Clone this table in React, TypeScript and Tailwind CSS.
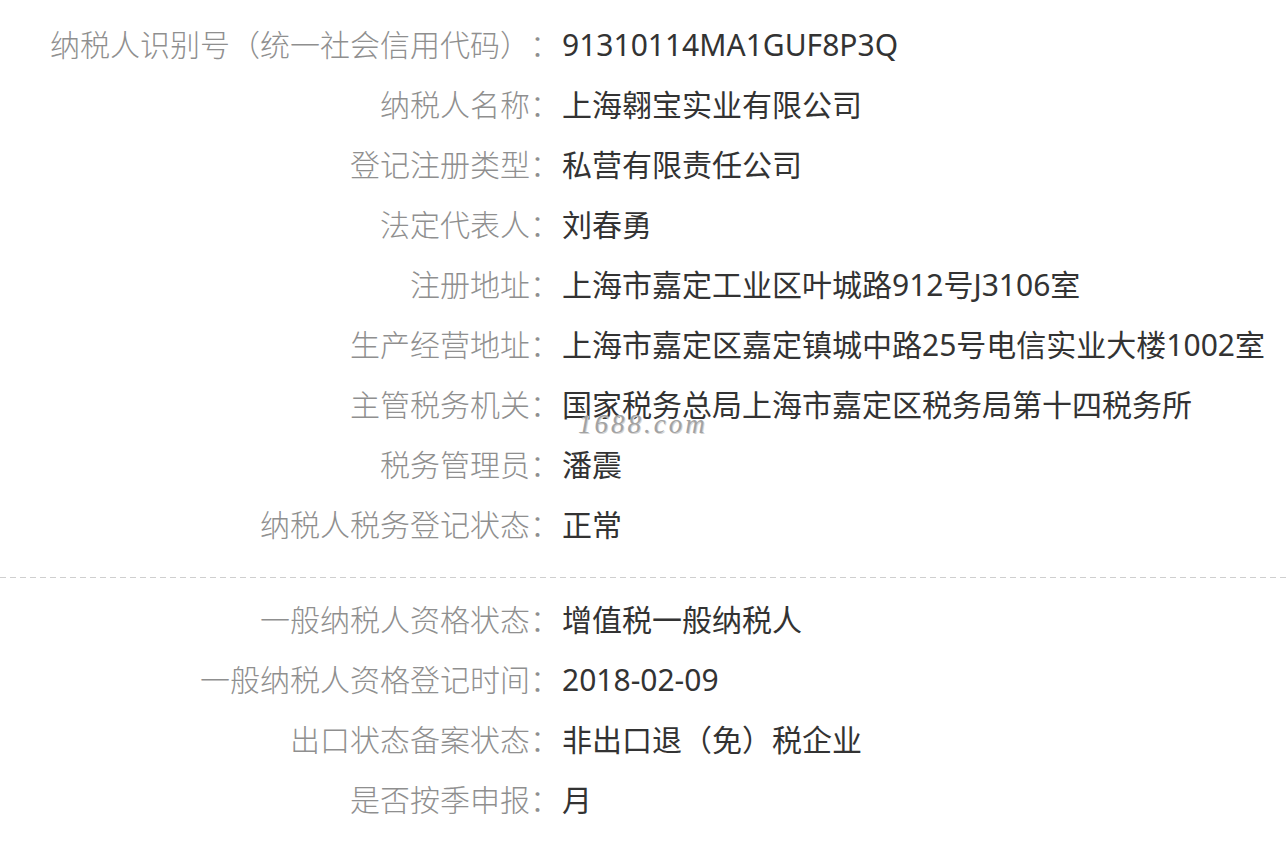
import React from 'react'

const basicRows: [string, string][] = [
  ['纳税人识别号（统一社会信用代码）', '91310114MA1GUF8P3Q'],
  ['纳税人名称', '上海翱宝实业有限公司'],
  ['登记注册类型', '私营有限责任公司'],
  ['法定代表人', '刘春勇'],
  ['注册地址', '上海市嘉定工业区叶城路912号J3106室'],
  ['生产经营地址', '上海市嘉定区嘉定镇城中路25号电信实业大楼1002室'],
  ['主管税务机关', '国家税务总局上海市嘉定区税务局第十四税务所'],
  ['税务管理员', '潘震'],
  ['纳税人税务登记状态', '正常'],
]

const extraRows: [string, string][] = [
  ['一般纳税人资格状态', '增值税一般纳税人'],
  ['一般纳税人资格登记时间', '2018-02-09'],
  ['出口状态备案状态', '非出口退（免）税企业'],
  ['是否按季申报', '月'],
]

function Row({ label, value, mark }: { label: string; value: string; mark?: boolean }) {
  return (
    <div className="flex h-[60px] items-center">
      <div className="w-[560px] shrink-0 text-right text-[30px] font-light text-[#8f8f8f] [text-spacing-trim:space-all]">{label}：</div>
      <div className="relative pl-[2px] text-[30px] text-[#333]">
        {value}
        {mark && (
          <span className="absolute left-[18px] top-[21px] whitespace-nowrap font-['Liberation_Serif',serif] text-[27px] italic leading-none tracking-[3px] text-[#a2a2a2] [text-shadow:1px_1px_0_#d4d4d4]">
            1688.com
          </span>
        )}
      </div>
    </div>
  )
}

export default function App() {
  return (
    <div className="h-[841px] w-[1287px] overflow-hidden bg-white font-['Noto_Sans','Noto_Sans_CJK_SC',sans-serif] leading-none">
      <div className="pt-[15px]">
        {basicRows.map(([l, v], i) => (
          <Row key={l} label={l} value={v} mark={i === 6} />
        ))}
      </div>
      <div className="mt-[22px] h-px bg-[repeating-linear-gradient(to_right,#cfcfcf_0_6px,transparent_6px_10px)]" />
      <div className="pt-[12px]">
        {extraRows.map(([l, v]) => (
          <Row key={l} label={l} value={v} />
        ))}
      </div>
    </div>
  )
}
